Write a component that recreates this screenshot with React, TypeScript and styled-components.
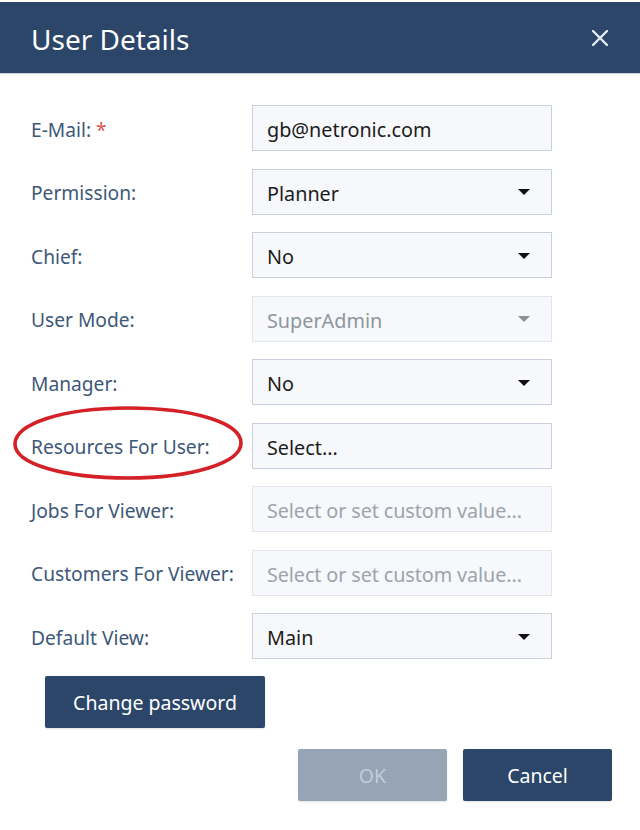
import React from "react";
import styled, { createGlobalStyle } from "styled-components";

const Global = createGlobalStyle`
  html, body { margin: 0; padding: 0; background: #ffffff; }
  body { font-family: "Noto Sans", "Open Sans", sans-serif; }
`;

const Dialog = styled.div`
  width: 640px;
  height: 830px;
  background: #ffffff;
  display: flex;
  flex-direction: column;
`;

const Header = styled.div`
  height: 71px;
  margin-top: 2px;
  background: #2b4669;
  border-bottom: 1px solid #cdd6e1;
  display: flex;
  align-items: center;
  justify-content: space-between;
  padding: 0 28px 0 31px;
`;

const Title = styled.h1`
  margin: 0;
  padding-top: 3px;
  font-size: 28px;
  font-weight: 400;
  color: #ffffff;
`;

const CloseButton = styled.button`
  border: 0;
  background: transparent;
  padding: 0;
  width: 24px;
  height: 24px;
  display: flex;
  align-items: center;
  justify-content: center;
  cursor: pointer;
`;

const Body = styled.div`
  padding: 31px 0 0 31px;
  display: flex;
  flex-direction: column;
`;

const Form = styled.div`
  display: grid;
  grid-template-columns: 221px 300px;
  grid-auto-rows: 46px;
  row-gap: 17.5px;
  align-items: center;
`;

const Label = styled.label`
  position: relative;
  font-size: 19.2px;
  color: #3e5879;
  white-space: nowrap;
  padding-top: 2px;
`;

const Required = styled.span`
  color: #d9534f;
  margin-left: 5px;
`;

const Field = styled.div<{ $disabled?: boolean }>`
  box-sizing: border-box;
  height: 46px;
  border: 1px solid ${(p) => (p.$disabled ? "#e1e6ec" : "#c7d0db")};
  background: #f6f8fb;
  display: flex;
  align-items: center;
  justify-content: space-between;
  padding: 3px 21px 0 14px;
  font-size: 19.8px;
  color: ${(p) => (p.$disabled ? "#8f959c" : "#1c1c1c")};
`;

const Placeholder = styled.span`
  color: #9ea4ab;
  letter-spacing: -0.1px;
`;

const Caret = styled.span<{ $disabled?: boolean }>`
  width: 0;
  height: 0;
  border-left: 6px solid transparent;
  border-right: 6px solid transparent;
  border-top: 6px solid ${(p) => (p.$disabled ? "#8d8f92" : "#111111")};
  margin-top: -2px;
`;

const Circle = styled.svg`
  position: absolute;
  left: -19px;
  top: -25px;
  width: 232px;
  height: 74px;
  overflow: visible;
  pointer-events: none;
`;

const Button = styled.button<{ $disabled?: boolean }>`
  border: 0;
  border-radius: 2px;
  height: 52px;
  font-family: "Noto Sans", "Open Sans", sans-serif;
  font-size: 19.5px;
  background: ${(p) => (p.$disabled ? "#96a4b6" : "#2b4669")};
  color: ${(p) => (p.$disabled ? "#c3ccd8" : "#ffffff")};
  box-shadow: 0 1px 2px rgba(0, 0, 0, 0.12);
  cursor: ${(p) => (p.$disabled ? "default" : "pointer")};
`;

const PasswordButton = styled(Button)`
  align-self: flex-start;
  width: 220px;
  margin: 17px 0 0 14px;
`;

const Footer = styled.div`
  display: flex;
  justify-content: flex-end;
  gap: 16px;
  padding: 21px 28px 0 0;
`;

const FooterButton = styled(Button)`
  width: 149px;
`;

type Row = {
  label: string;
  value?: string;
  placeholder?: string;
  caret?: boolean;
  disabled?: boolean;
  required?: boolean;
  circled?: boolean;
};

const rows: Row[] = [
  { label: "E-Mail:", value: "gb@netronic.com", required: true },
  { label: "Permission:", value: "Planner", caret: true },
  { label: "Chief:", value: "No", caret: true },
  { label: "User Mode:", value: "SuperAdmin", caret: true, disabled: true },
  { label: "Manager:", value: "No", caret: true },
  { label: "Resources For User:", value: "Select...", circled: true },
  { label: "Jobs For Viewer:", placeholder: "Select or set custom value...", disabled: true },
  { label: "Customers For Viewer:", placeholder: "Select or set custom value...", disabled: true },
  { label: "Default View:", value: "Main", caret: true },
];

export default function App() {
  return (
    <>
      <Global />
      <Dialog>
        <Header>
          <Title>User Details</Title>
          <CloseButton aria-label="Close">
            <svg width="18" height="18" viewBox="0 0 18 18">
              <path d="M2 2 L16 16 M16 2 L2 16" stroke="#e6ecf3" strokeWidth="2.4" strokeLinecap="round" />
            </svg>
          </CloseButton>
        </Header>
        <Body>
          <Form>
            {rows.map((r) => (
              <React.Fragment key={r.label}>
                <Label>
                  {r.label}
                  {r.required && <Required>*</Required>}
                  {r.circled && (
                    <Circle viewBox="0 0 232 74">
                      <path
                        d="M116 2 C 50 2, 3 18, 3 38 C 3 58, 52 72, 116 72 C 180 72, 229 57, 229 37 C 229 17, 182 2, 116 2 Z"
                        fill="none"
                        stroke="#d42128"
                        strokeWidth="3.6"
                        strokeLinejoin="round"
                      />
                    </Circle>
                  )}
                </Label>
                <Field $disabled={r.disabled}>
                  {r.placeholder ? <Placeholder>{r.placeholder}</Placeholder> : <span>{r.value}</span>}
                  {r.caret && <Caret $disabled={r.disabled} />}
                </Field>
              </React.Fragment>
            ))}
          </Form>
          <PasswordButton>Change password</PasswordButton>
        </Body>
        <Footer>
          <FooterButton $disabled disabled>
            OK
          </FooterButton>
          <FooterButton>Cancel</FooterButton>
        </Footer>
      </Dialog>
    </>
  );
}
